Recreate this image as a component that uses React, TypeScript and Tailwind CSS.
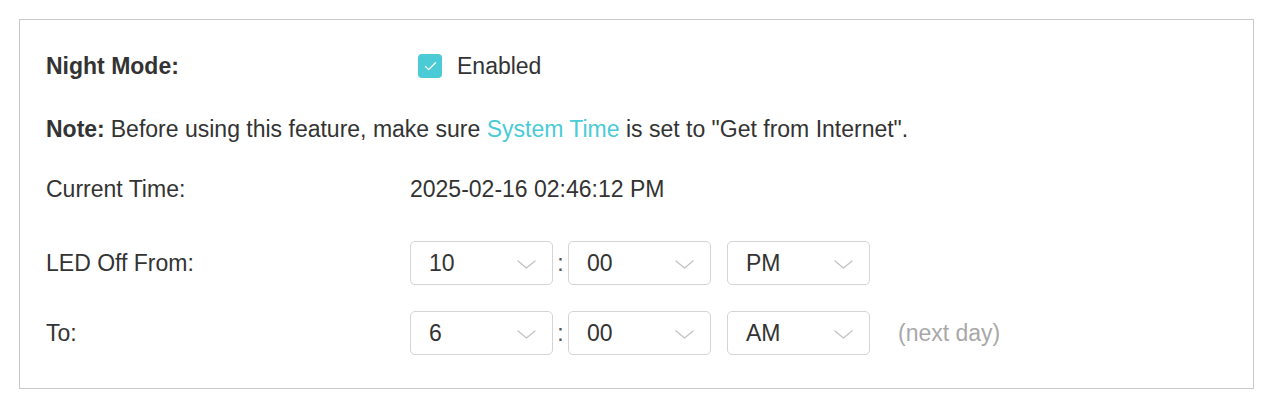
import { Check } from 'lucide-react';

// Night mode settings panel

function Select({ value }: { value: string }) {
  return (
    <div className="flex h-[44px] w-[143px] items-center justify-between rounded-[5px] border border-[#d4d4d4] bg-white pl-[18px] pr-[16px]">
      <span>{value}</span>
      <svg width="19" height="9" viewBox="0 0 19 9" fill="none" className="mt-[2px]">
        <polyline points="1,1 9.5,8 18,1" stroke="#c4c4c4" strokeWidth="1.4" strokeLinecap="round" strokeLinejoin="round" />
      </svg>
    </div>
  );
}

function TimeRow({ label, h, m, ap, extra }: { label: string; h: string; m: string; ap: string; extra?: string }) {
  return (
    <div className="flex items-center">
      <div className="w-[364px]">{label}</div>
      <div className="flex items-center">
        <Select value={h} />
        <span className="w-[15px] text-center text-[#555]">:</span>
        <Select value={m} />
        <div className="ml-[16px]">
          <Select value={ap} />
        </div>
        {extra && <span className="ml-[28px] text-[#a8a8a8]">{extra}</span>}
      </div>
    </div>
  );
}

export default function App() {
  return (
    <div className="min-h-screen bg-white p-[19px] font-['Liberation_Sans',Arial,sans-serif] text-[23px] text-[#333333]">
      <div className="flex h-[370px] w-[1235px] flex-col border border-[#c8c8c8] pl-[26px] pt-[31px]">
        <div className="flex h-[30px] items-center">
          <div className="w-[372px] font-bold">Night Mode:</div>
          <div className="flex items-center">
            <span className="flex h-[24px] w-[24px] items-center justify-center rounded-[4px] bg-[#4acbd6]">
              <Check className="h-[15px] w-[15px] text-white" strokeWidth={2} />
            </span>
            <span className="ml-[15px]">Enabled</span>
          </div>
        </div>

        <div className="mt-[33px] flex h-[30px] items-center">
          <span className="font-bold">Note:</span>
          <span className="ml-[6px]">
            Before using this feature, make sure <span className="text-[#4acbd6]">System Time</span> is set to
            "Get from Internet".
          </span>
        </div>

        <div className="mt-[30px] flex h-[30px] items-center">
          <div className="w-[364px]">Current Time:</div>
          <div>2025-02-16 02:46:12 PM</div>
        </div>

        <div className="mt-[37px]">
          <TimeRow label="LED Off From:" h="10" m="00" ap="PM" />
        </div>
        <div className="mt-[26px]">
          <TimeRow label="To:" h="6" m="00" ap="AM" extra="(next day)" />
        </div>
      </div>
    </div>
  );
}
